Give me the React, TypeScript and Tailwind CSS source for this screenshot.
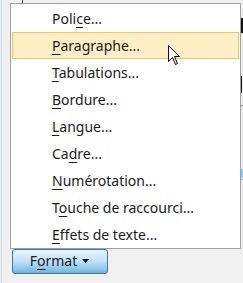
import React from 'react';

const items: { label: string; key: number }[] = [
  { label: 'Police...', key: 4 },
  { label: 'Paragraphe...', key: 0 },
  { label: 'Tabulations...', key: 0 },
  { label: 'Bordure...', key: 0 },
  { label: 'Langue...', key: 0 },
  { label: 'Cadre...', key: 2 },
  { label: 'Numérotation...', key: 0 },
  { label: 'Touche de raccourci...', key: 1 },
  { label: 'Effets de texte...', key: 0 },
];

// underline the access key letter
const Mnemonic: React.FC<{ text: string; at: number }> = ({ text, at }) => (
  <>
    {text.slice(0, at)}
    <span className="underline underline-offset-[3px] decoration-1">{text[at]}</span>
    {text.slice(at + 1)}
  </>
);

export default function App() {
  return (
    <div
      className="relative w-[243px] h-[283px] overflow-hidden bg-[#f0f0f0] flex text-[#1b1b1b]"
      style={{ fontFamily: '"Noto Sans", "Open Sans", sans-serif' }}
    >
      {/* window edge on the left */}
      <div className="w-[1px] h-full bg-[#e6eef7]" />
      <div className="w-[1px] h-full bg-[#cdd8e6]" />

      {/* bits of the dialog behind the menu */}
      <div className="absolute left-[22px] top-0 w-[1px] h-[3px] bg-[#3c3c3c]" />
      <div className="absolute left-[241px] top-[18px] w-[2px] h-[15px] bg-[#111]" />
      <div className="absolute left-[241px] top-[76px] w-[1px] h-[17px] bg-[#111]" />
      <div className="absolute left-[241px] top-[105px] w-[2px] h-[1px] bg-[#8a8a8a]" />
      <div className="absolute left-[241px] top-[106px] w-[2px] h-[4px] bg-[#e4e4e4]" />
      <div className="absolute left-[241px] top-[169px] w-[2px] h-[9px] bg-[#8fc6ec]" />
      <div className="absolute left-[241px] top-[179px] w-[2px] h-[1px] bg-[#9a9a9a]" />

      <div className="flex flex-col pl-[8px] pt-[3px]">
        {/* popup menu */}
        <div className="w-[231px] h-[246px] bg-white border border-[#a0a0a0] pt-[1px] px-[1px] flex flex-col">
          {items.map((it, i) => (
            <div
              key={it.label}
              className={`h-[27px] flex items-center pl-[39px] text-[14px] leading-none border ${
                i === 1 ? 'bg-[#fdefc3] border-[#f0c95a]' : 'border-transparent'
              }`}
            >
              <span className="mt-[1px]">
                <Mnemonic text={it.label} at={it.key} />
              </span>
            </div>
          ))}
        </div>

        {/* Format button */}
        <button className="ml-[2px] w-[96px] h-[25px] rounded-[3px] border border-[#3a78aa] bg-gradient-to-b from-[#e9f5fc] via-[#bfe1f5] to-[#6cb7e3] flex items-center justify-center gap-[5px] text-[14px] leading-none pb-[1px]">
          <span>
            <Mnemonic text="Format" at={1} />
          </span>
          <svg width="8" height="4" viewBox="0 0 8 4">
            <path d="M0 0H7L3.5 4Z" fill="#111" />
          </svg>
        </button>
      </div>

      {/* mouse pointer */}
      <svg className="absolute left-[168px] top-[45px]" width="13" height="20" viewBox="0 0 13 20">
        <path
          d="M0.5 0.5V16.5L4.5 12.5L7.5 19.5L9.5 18.5L6.5 11.5H11.5Z"
          fill="#fff"
          stroke="#000"
          strokeWidth="1"
          strokeLinejoin="miter"
        />
      </svg>
    </div>
  );
}
